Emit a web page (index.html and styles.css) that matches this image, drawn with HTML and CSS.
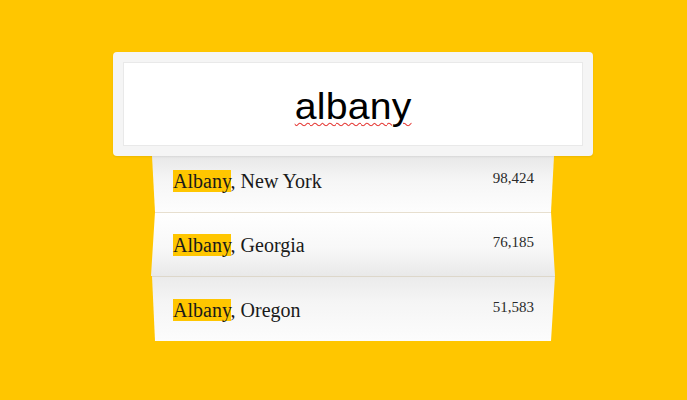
FILE: index.html
```html
<!DOCTYPE html>
<html>
<head>
<meta charset="utf-8">
<link rel="stylesheet" href="styles.css">
</head>
<body>
<div class="wrap">
  <div class="search-card">
    <div class="search-input"><span class="query">albany</span></div>
  </div>
  <ul class="results">
    <li class="row row-1">
      <span class="city"><mark class="hl">Albany</mark>, New York</span>
      <span class="pop">98,424</span>
    </li>
    <li class="row row-2">
      <span class="city"><mark class="hl">Albany</mark>, Georgia</span>
      <span class="pop">76,185</span>
    </li>
    <li class="row row-3">
      <span class="city"><mark class="hl">Albany</mark>, Oregon</span>
      <span class="pop">51,583</span>
    </li>
  </ul>
</div>
</body>
</html>
```
FILE: styles.css
```css
html, body {
  margin: 0;
  padding: 0;
}
body {
  background: #ffc600;
  width: 687px;
  height: 400px;
  overflow: hidden;
}
.wrap {
  width: 480px;
  margin-left: 113px;
  padding-top: 52px;
}
.search-card {
  background: #f5f5f5;
  border-radius: 4px;
  padding: 10px;
  box-shadow: 0 1px 2px rgba(0,0,0,0.08);
  position: relative;
  z-index: 2;
}
.search-input {
  height: 82px;
  background: #fff;
  border: 1px solid #e9e9e9;
  display: flex;
  align-items: center;
  justify-content: center;
}
.query {
  display: inline-block;
  font-family: "Liberation Sans", Arial, sans-serif;
  font-size: 37px;
  color: #000;
  letter-spacing: 0.2px;
  transform: scaleX(1.06);
  margin-top: 5px;
  text-decoration: underline wavy #e53935;
  text-decoration-thickness: 1px;
  text-underline-offset: 3px;
}
.results {
  list-style: none;
  margin: 0 0 0 38px;
  padding: 0;
  width: 404px;
  display: flex;
  flex-direction: column;
}
.row {
  box-sizing: border-box;
  display: flex;
  justify-content: space-between;
  align-items: flex-start;
  padding: 0 22px;
  font-family: "Liberation Serif", "Times New Roman", serif;
}
.row-1 {
  height: 56px;
  padding-top: 14px;
  background: linear-gradient(#e8e8e8, #f6f6f6 45%, #fdfdfd);
  clip-path: polygon(1px 0, 403px 0, 400px 100%, 4px 100%);
}
.row-2 {
  height: 64px;
  padding-top: 21px;
  background: linear-gradient(#ffffff, #f8f8f8 55%, #e9e9e9);
  border-top: 1px solid #e7dfcf;
  clip-path: polygon(4px 0, 400px 0, 404px 100%, 0 100%);
}
.row-3 {
  height: 65px;
  padding-top: 22px;
  background: linear-gradient(#ebebeb, #f5f5f5 40%, #fcfcfc);
  border-top: 1px solid #ddd7ca;
  clip-path: polygon(1px 0, 404px 0, 400px 100%, 4px 100%);
}
.city {
  font-size: 20px;
  color: #1a1a1a;
}
.hl {
  background: #ffc600;
  color: #1a1a1a;
}
.pop {
  font-size: 15px;
  color: #2a2a2a;
  margin-right: -1px;
}
```
